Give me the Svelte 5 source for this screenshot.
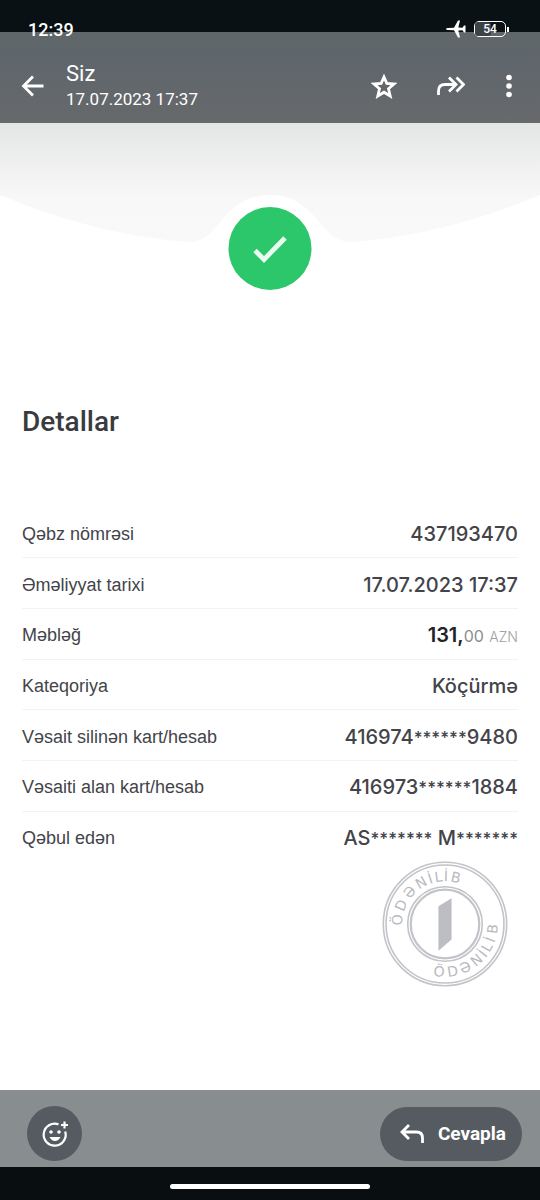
<script>
	let sender = 'Siz';
	let sentAt = '17.07.2023 17:37';
	let battery = 54;

	let details = [
		{ label: 'Qəbz nömrəsi', value: '437193470' },
		{ label: 'Əməliyyat tarixi', value: '17.07.2023 17:37' },
		{ label: 'Məbləğ', whole: '131,', cents: '00', currency: 'AZN' },
		{ label: 'Kateqoriya', value: 'Köçürmə' },
		{ label: 'Vəsait silinən kart/hesab', value: '416974******9480' },
		{ label: 'Vəsaiti alan kart/hesab', value: '416973******1884' },
		{ label: 'Qəbul edən', value: 'AS******* M*******' }
	];

	// Splits a value into plain and masked pieces
	function pieces(value) {
		return value.split(/(\*+)/).filter((piece) => piece !== '');
	}

	// Half the width of each letter of the stamp text
	let halves = [5.5, 5.4, 5.5, 5.2, 2.1, 3.9, 2.1, 4.8];

	// Glyph positions round the stamp, radius is negative for the top arc
	function ring(angles, radius) {
		let x = [],
			y = [];
		for (let i = 0; i < angles.length; i++) {
			let a = (angles[i] * Math.PI) / 180;
			x.push((62.5 - radius * Math.sin(a) - halves[i] * Math.cos(a)).toFixed(2));
			y.push((62.5 + radius * Math.cos(a) - halves[i] * Math.sin(a)).toFixed(2));
		}
		return { x: x.join(' '), y: y.join(' '), rotate: angles.join(' ') };
	}

	let stampTop = ring([-85, -67, -48, -30, -18, -8, 1, 13], -42.5);
	let stampBottom = ring([7, -9, -25, -41, -52, -61, -71, -84], 52.5);
</script>

<div class="screen">
	<header>
		<div class="status">
			<span>12:39</span>
			<div class="indicators">
				<svg width="20" height="18" viewBox="0 0 20 18" aria-hidden="true">
					<path
						d="M0 9 Q0 8 2 8 L8 7.700 L12 0.500 H14 L12.300 7.600 L16.500 7.800 L18 5.500 H19.500 V12.500 H18 L16.500 10.200 L12.300 10.400 L14 17.500 H12 L8 10.300 L2 10 Q0 10 0 9Z"
						fill="#fff"
					/>
				</svg>
				<div class="battery">
					<div class="level" style="width: {battery}%"></div>
					<span>{battery}</span>
				</div>
			</div>
		</div>

		<div class="toolbar">
			<button aria-label="Geri">
				<svg width="24" height="24" viewBox="0 0 24 24">
					<path d="M22.500 12H2.500M12 2.500L2.500 12L12 21.500" />
				</svg>
			</button>
			<div class="title">
				<h1>{sender}</h1>
				<p>{sentAt}</p>
			</div>
			<div class="actions">
				<button aria-label="Yıldızla">
					<svg width="26" height="26" viewBox="0 0 26 26">
						<path
							d="M13 4L15.800 10.400L23 11L17.500 15.700L19.200 23L13 19.200L6.800 23L8.500 15.700L3 11L10.200 10.400Z"
						/>
					</svg>
				</button>
				<button aria-label="İlet">
					<svg width="28" height="24" viewBox="0 0 28 24">
						<path d="M1.500 21V17Q1.500 10.500 8 10.500H19M12 3.500L19 10.500L12 17.500M19.500 3.500L26.500 10.500L19.500 17.500" />
					</svg>
				</button>
				<button aria-label="Menü">
					<svg width="8" height="24" viewBox="0 0 8 24">
						<g class="dots">
							<circle cx="4" cy="3.500" r="2.800" />
							<circle cx="4" cy="12" r="2.800" />
							<circle cx="4" cy="20.500" r="2.800" />
						</g>
					</svg>
				</button>
			</div>
		</div>
	</header>

	<main>
		<svg class="hero" viewBox="0 0 540 180" aria-hidden="true">
			<defs>
				<linearGradient id="fade" x1="0" y1="0" x2="0" y2="1">
					<stop offset="0" stop-color="#e4e6e5" />
					<stop offset="0.650" stop-color="#f8f8f8" />
					<stop offset="1" stop-color="#f9f9f9" />
				</linearGradient>
			</defs>
			<path
				d="M0 0H540V72Q445 112 352 119Q338 119 328 109C310 88 298 72 270 72C242 72 230 88 212 109Q202 119 188 119Q95 112 0 72Z"
				fill="url(#fade)"
			/>
			<circle cx="270" cy="125.500" r="41.500" fill="#2dc76b" />
			<path d="M255 127.500L264 136.500L285 115" fill="none" stroke="#e9fcf0" stroke-width="4.800" />
		</svg>

		<section>
			<h2>Detallar</h2>
			<table>
				<tbody>
					{#each details as row}
						<tr>
							<th scope="row">{row.label}</th>
							{#if row.whole}
								<td>
									<b>{row.whole}</b><span class="cents">{row.cents}</span>
									<span class="currency">{row.currency}</span>
								</td>
							{:else}
								<td>
									{#each pieces(row.value) as piece}<span class:mask={piece[0] === '*'}>{piece}</span>{/each}
								</td>
							{/if}
						</tr>
					{/each}
				</tbody>
			</table>

			<svg class="stamp" width="126" height="126" viewBox="0 0 125 125">
				<g fill="none" stroke="#c3c4c9">
					<circle cx="62.500" cy="62.500" r="61.200" stroke-width="1.600" />
					<circle cx="62.500" cy="62.500" r="58.500" stroke-width="1.600" />
					<circle cx="62.500" cy="62.500" r="37" stroke-width="1.600" />
					<circle cx="62.500" cy="62.500" r="34" stroke-width="2.200" />
				</g>
				<path d="M56 45L69 37V78L56 89Z" fill="#bdbec3" />
				<text {...stampTop}>ÖDƏNİLİB</text>
				<text {...stampBottom}>ÖDƏNİLİB</text>
			</svg>
		</section>
	</main>

	<footer>
		<button class="react" aria-label="Tepki ekle">
			<svg width="28" height="28" viewBox="0 0 28 28">
				<path d="M17.500 4.400A11 11 0 1 0 24.200 11.500" />
				<path d="M23.500 1.500V8.500M20 5H27" />
				<g class="dots">
					<circle cx="10" cy="12" r="1.800" />
					<circle cx="18" cy="12" r="1.800" />
					<path d="M8.500 17H19.500Q17.500 21 14 21T8.500 17Z" />
				</g>
			</svg>
		</button>
		<button class="reply">
			<svg width="24" height="22" viewBox="0 0 24 22">
				<path d="M22.500 20V15Q22.500 9 16.500 9H2M9 2L2 9L9 16" />
			</svg>
			Cevapla
		</button>
	</footer>
	<div class="nav"><div class="handle"></div></div>
</div>

<style>
	:global(body) {
		background: #fff;
	}

	.screen {
		display: flex;
		flex-direction: column;
		min-height: 100vh;
		font-family: Roboto, sans-serif;
		color: #fff;
	}

	h1,
	h2,
	p {
		margin: 0;
		font-weight: 400;
	}

	button {
		display: flex;
		align-items: center;
		padding: 0;
		border: none;
		background: none;
		color: #fff;
		font-family: inherit;
		cursor: pointer;
	}

	button svg {
		fill: none;
		stroke: #fff;
		stroke-width: 2.8;
	}

	.dots {
		fill: #fff;
		stroke: none;
	}

	header {
		/* the photo starts under the black system strip */
		background: linear-gradient(#0a1114 32px, #5f6769 32px, #5f666c 60px, #67696b 100%);
	}

	.status {
		display: flex;
		justify-content: space-between;
		align-items: center;
		padding: 17px 34px 0 28px;
		height: 24px;
		font-size: 18px;
		font-weight: 500;
	}

	.indicators {
		display: flex;
		align-items: center;
		gap: 8px;
	}

	.battery {
		position: relative;
		box-sizing: border-box;
		width: 32px;
		height: 16px;
		border: 1px solid #fff;
		border-radius: 5px;
		font-size: 12px;
		line-height: 14px;
		text-align: center;
	}

	.battery::after {
		content: '';
		position: absolute;
		top: 5px;
		right: -4px;
		width: 2px;
		height: 5px;
		background: #fff;
	}

	.battery span {
		position: relative;
	}

	.level {
		position: absolute;
		inset: 0 auto 0 0;
		border-radius: 3px;
		background: #3c4346;
	}

	.toolbar {
		display: flex;
		align-items: center;
		gap: 21px;
		height: 82px;
		padding: 8px 27px 0 21px;
		box-sizing: border-box;
	}

	.title {
		flex: 1;
	}

	h1 {
		font-size: 22px;
		line-height: 26px;
	}

	p {
		font-size: 17px;
		line-height: 24px;
	}

	.actions {
		display: flex;
		align-items: center;
		gap: 40px;
	}

	.hero {
		display: block;
		width: 100%;
	}

	section {
		display: flex;
		flex-direction: column;
		padding: 103px 22px 103px;
		color: #43444a;
	}

	h2 {
		font-size: 28px;
		font-weight: 500;
		line-height: 32px;
		color: #3a3b3f;
	}

	table {
		height: 353px;
		margin-top: 70px;
		border-collapse: collapse;
	}

	th,
	td {
		padding: 3px 0 0;
		line-height: 24px;
	}

	th {
		font-family: 'Liberation Sans', sans-serif;
		font-size: 18px;
		font-weight: 400;
		text-align: left;
	}

	td {
		font-family: Inter, sans-serif;
		font-size: 20px;
		font-weight: 500;
		text-align: right;
	}

	/* small pieces must not make their row taller */
	td span {
		line-height: 16px;
	}

	tr + tr {
		border-top: 1px solid #f3f3f4;
	}

	b {
		font-weight: 600;
		color: #222327;
	}

	.mask {
		font-size: 17px;
	}

	.cents {
		font-size: 16px;
		font-weight: 400;
		color: #8c8c90;
	}

	.currency {
		font-size: 14px;
		font-weight: 300;
		color: #a0a0a4;
	}

	.stamp {
		align-self: flex-end;
		margin-right: 10px;
	}

	.stamp text {
		font-family: 'DejaVu Sans', sans-serif;
		font-size: 14px;
		fill: #b8b9be;
	}

	footer {
		display: flex;
		justify-content: space-between;
		align-items: center;
		margin-top: auto;
		height: 77px;
		padding: 10px 18px 0 27px;
		box-sizing: border-box;
		background: #888d8f;
	}

	footer button {
		justify-content: center;
		height: 54px;
		border-radius: 28px;
		background: #555b61;
	}

	.react {
		width: 55px;
		height: 55px;
	}

	.react svg {
		stroke-width: 2.2;
	}

	.reply {
		gap: 14px;
		padding: 0 16px 0 20px;
		font-size: 19px;
		font-weight: 700;
	}

	.nav {
		display: flex;
		justify-content: center;
		align-items: center;
		height: 33px;
		padding-top: 6px;
		box-sizing: border-box;
		background: #090e10;
	}

	.handle {
		width: 37%;
		height: 5px;
		border-radius: 3px;
		background: #fff;
	}
</style>
